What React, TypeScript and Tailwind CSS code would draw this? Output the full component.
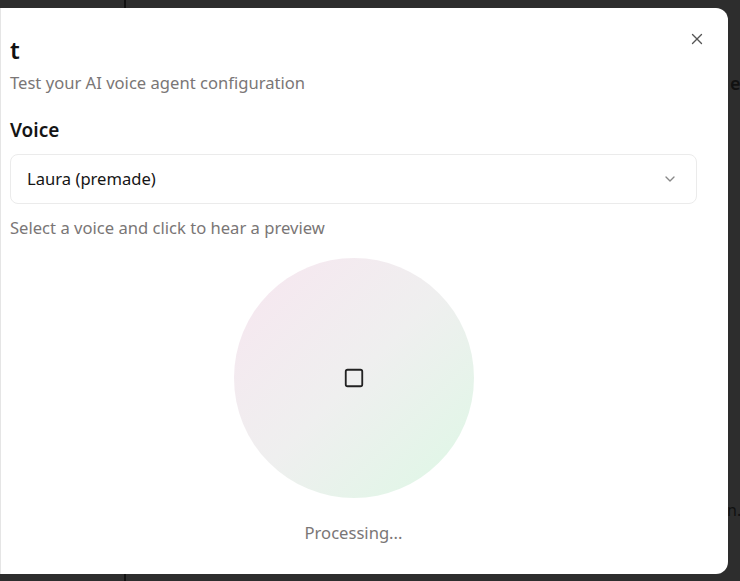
import { X, ChevronDown, Square } from "lucide-react";

export default function App() {
  return (
    <div
      className="relative h-[581px] w-[740px] overflow-hidden bg-[#2d2d2d]"
      style={{ fontFamily: '"Noto Sans", "Open Sans", sans-serif' }}
    >
      {/* page behind the overlay */}
      <div className="absolute inset-y-0 left-[124px] w-[2px] bg-[#111111]" />
      <div className="absolute left-[730px] top-[70px] text-[18px] font-semibold text-[#111111]">
        e
      </div>
      <div className="absolute left-[727px] top-[498px] text-[16px] text-[#111111]">
        n.
      </div>

      {/* dialog */}
      <div className="absolute left-0 top-[8px] flex h-[566px] w-[728px] flex-col rounded-r-[12px] border-l border-[#e5e5e5] bg-white pl-[9px] pr-[31px] pt-[28px]">
        <button className="absolute right-[22px] top-[22px] text-[#555555]">
          <X className="size-[18px]" strokeWidth={1.8} />
        </button>
        <h2 className="text-[24px] font-semibold leading-[28px] text-[#111111]">t</h2>
        <p className="mt-[7px] text-[16.6px] leading-[24px] text-[#7a7676]">
          Test your AI voice agent configuration
        </p>

        <label className="mt-[22px] text-[19px] font-semibold leading-[26px] text-[#151515]">
          Voice
        </label>
        <button className="mt-[11px] flex h-[50px] w-full items-center justify-between rounded-[8px] border border-[#ebebeb] bg-white pl-[16px] pr-[18px] text-left">
          <span className="text-[16.6px] text-[#151515]">Laura (premade)</span>
          <ChevronDown className="size-[16px] text-[#888888]" strokeWidth={2} />
        </button>
        <p className="mt-[12px] text-[16.6px] leading-[24px] text-[#7a7676]">
          Select a voice and click to hear a preview
        </p>

        <div className="mt-[18px] flex flex-col items-center">
          <div className="flex size-[240px] items-center justify-center rounded-full bg-gradient-to-br from-[#f7e6f0] via-[#efefef] to-[#ddf8e5]">
            <Square className="size-[22px] text-[#222222]" strokeWidth={2} />
          </div>
          <p className="mt-[23px] text-[16.6px] leading-[24px] text-[#7a7676]">Processing...</p>
        </div>
      </div>
    </div>
  );
}
